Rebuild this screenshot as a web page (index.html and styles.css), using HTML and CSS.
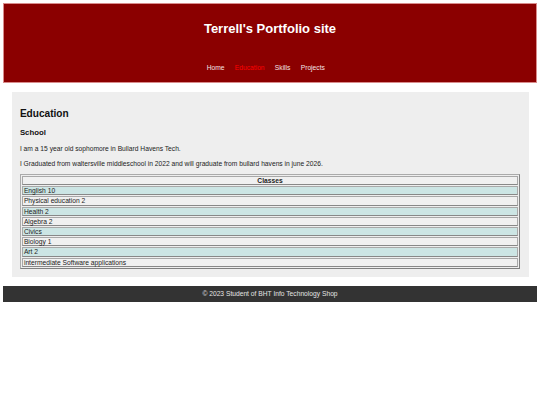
FILE: index.html
```html
<!DOCTYPE html>
<html lang="en">
<head>
  <meta charset="UTF-8">
  <title>Terrell's Portfolio site - Education</title>
  <link rel="stylesheet" href="styles.css">
</head>
<body>

  <header class="site-header">
    <h1>Terrell's Portfolio site</h1>
    <nav class="nav">
      <a href="#">Home</a>
      <a href="#" class="active">Education</a>
      <a href="#">Skills</a>
      <a href="#">Projects</a>
    </nav>
  </header>

  <main class="content">
    <h2>Education</h2>
    <h3>School</h3>
    <p>I am a 15 year old sophomore in Bullard Havens Tech.</p>
    <p>I Graduated from waltersville middleschool in 2022 and will graduate from bullard havens in june 2026.</p>

    <table class="classes">
      <tr><th>Classes</th></tr>
      <tr><td>English 10</td></tr>
      <tr><td>Physical education 2</td></tr>
      <tr><td>Health 2</td></tr>
      <tr><td>Algebra 2</td></tr>
      <tr><td>Civics</td></tr>
      <tr><td>Biology 1</td></tr>
      <tr><td>Art 2</td></tr>
      <tr><td>intermediate Software applications</td></tr>
    </table>
  </main>

  <footer class="site-footer">
    &copy; 2023 Student of BHT Info Technology Shop
  </footer>

</body>
</html>
```

FILE: styles.css
```css
html, body {
  font-family: "Liberation Sans", Arial, sans-serif;
}

body {
  margin: 3px;
  font-size: 6.7px;
  line-height: 7.7px;
  background: #fff;
  color: #222;
}

.site-header {
  background: #8b0000;
  border: 1px solid #d98c8c;
  padding: 8px 0 8px;
  text-align: center;
}

.site-header h1 {
  margin: 9px 0;
  font-size: 13px;
  line-height: 15px;
  color: #fff;
}

.nav {
  margin: 28px 0 2px;
}

.nav a {
  color: #f4e4e4;
  text-decoration: none;
  margin-right: 8.4px;
}

.nav a.active {
  color: #ff0000;
}

.content {
  background: #eee;
  margin: 9px 8.5px 0;
  padding: 8.4px;
}

.content h2 {
  margin: 8.4px 0;
  font-size: 10.1px;
  line-height: 11.6px;
  color: #111;
}

.content h3 {
  margin: 7.8px 0;
  font-size: 7.8px;
  line-height: 9px;
  color: #111;
}

.content p {
  margin: 6.7px 0;
}

.classes {
  width: 100%;
  border: 1px solid #aaa;
  border-right-color: #808080;
  border-bottom-color: #808080;
  border-spacing: 1px;
  margin-top: 6.7px;
}

.classes th,
.classes td {
  border: 1px solid #a8a8a8;
  border-bottom-color: #888;
  padding: 0 1px;
  line-height: 7.2px;
  text-align: left;
  background: #f0f0f0;
}

.classes th {
  text-align: center;
}

.classes tr:nth-child(even) td {
  background: #cce5e4;
}

.site-footer {
  margin-top: 8.6px;
  background: #333;
  color: #e4e4e4;
  text-align: center;
  padding: 4.2px 0;
}
```
